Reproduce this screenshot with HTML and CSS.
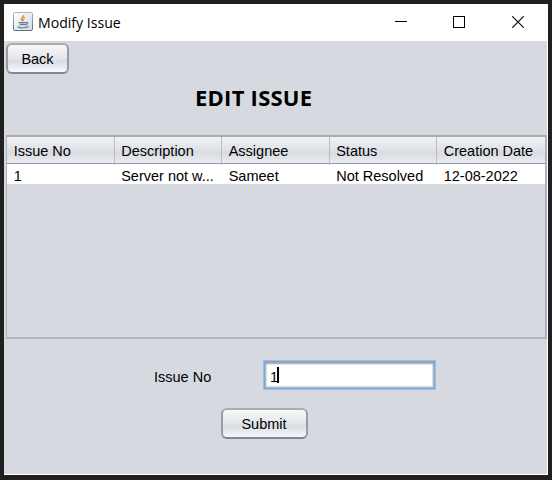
FILE: index.html
```html
<!DOCTYPE html>
<html lang="en">
<head>
<meta charset="utf-8">
<title>Modify Issue</title>
<link rel="stylesheet" href="styles.css">
</head>
<body>
<div class="window">
  <header class="titlebar">
    <svg class="app-icon" width="20" height="19" viewBox="0 0 20 19" fill="none">
      <defs>
        <linearGradient id="tile" x1="0" y1="0" x2="1" y2="1"><stop offset="0" stop-color="#fff"/><stop offset="1" stop-color="#d3dae1"/></linearGradient>
        <linearGradient id="edge" x1="0" y1="0" x2="0" y2="1"><stop offset="0" stop-color="#a9b7c4"/><stop offset="1" stop-color="#567189"/></linearGradient>
      </defs>
      <rect x=".5" y=".5" width="19" height="18" rx="1.5" fill="url(#tile)" stroke="url(#edge)"/>
      <path d="M10.500 3c1 2-3.500 3-2 5 .5.700 1 1 1 1.500M12 5.500c-2 1-2.500 2-1.500 3.500" stroke="#e8964f" stroke-width="1.500"/>
      <path d="M5.500 10.700h7.500M6.500 12.500h6M13 10.300c2.500-.2 2 2-.5 2.500M4.500 14.800c3 1.300 8 1.300 11-.4" stroke="#6487a4" stroke-width="1.300"/>
    </svg>
    <span class="window-title">Modify Issue</span>
    <div class="controls">
      <svg width="12" height="12" viewBox="0 0 12 12"><path d="M0 5.500h12" stroke="#000"/></svg>
      <svg width="12" height="12" viewBox="0 0 12 12"><rect x=".5" y=".5" width="11" height="11" fill="none" stroke="#000"/></svg>
      <svg class="close" width="12" height="12" viewBox="0 0 12 12"><path d="M.3.3l11.400 11.400M11.700.3L.3 11.700" stroke="#000" stroke-width="1.100"/></svg>
    </div>
  </header>
  <main class="content">
    <button class="button back">Back</button>
    <h1 class="heading">EDIT ISSUE</h1>
    <div class="table">
      <div class="row head"><span>Issue No</span><span>Description</span><span>Assignee</span><span>Status</span><span>Creation Date</span></div>
      <div class="row record"><span>1</span><span>Server not w...</span><span>Sameet</span><span>Not Resolved</span><span>12-08-2022</span></div>
    </div>
    <div class="form">
      <span class="label">Issue No</span>
      <div class="field">1<i class="caret"></i></div>
    </div>
    <button class="button submit">Submit</button>
  </main>
</div>
</body>
</html>
```
FILE: styles.css
```css
* { box-sizing: border-box; }
body {
  margin: 0;
  width: 552px;
  height: 480px;
  padding: 4px 4px 5px;
  overflow: hidden;
  background: #211f20;
  font: 14.5px/18px "Liberation Sans", Arial, sans-serif;
  color: #000;
}
.window { width: 544px; height: 471px; background: #fff; }
.titlebar { display: flex; align-items: center; height: 37px; padding: 0 24px 0 9px; }
.app-icon { flex: none; margin-top: -2px; }
.window-title { margin-left: 5px; font: 14.1px/20px "Open Sans", sans-serif; white-space: nowrap; }
.controls { display: flex; gap: 46px; margin: -1px 1px 0 auto; }
.controls svg { display: block; }
.controls .close { margin: 0 -1px 0 1px; }
.content { display: flex; flex-direction: column; width: 543px; height: 433px; background: #d6d9e0; }
.button {
  flex: none;
  padding: 0;
  border: 2px solid;
  border-color: #a9acb1 #989ba1 #84878e;
  border-radius: 6px;
  background: linear-gradient(#f7f8f9, #e5e7eb 48%, #d9dce2 58%, #e7eaf1 80%, #f5f8ff);
  font: inherit;
  color: #000;
}
.back { width: 63px; height: 31px; margin: 2px 0 0 2px; padding-top: 1px; }
.heading {
  margin: 8px 0 0 191px;
  height: 30px;
  font: bold 22px/30px "Open Sans", sans-serif;
  letter-spacing: .25px;
  white-space: nowrap;
}
.table {
  width: 541px;
  height: 204px;
  margin: 23px 0 0 2px;
  border: 1px solid #aeb1bb;
  border-top: 2px solid #a9acb4;
  border-right: 2px solid #aeb1be;
  border-bottom: 2px solid #b4b7be;
}
.row { display: grid; grid-template-columns: repeat(5, 107.5px); white-space: nowrap; }
.row span { padding-left: 6.7px; }
.head {
  height: 27px;
  line-height: 28px;
  border-bottom: 1px solid #9297a1;
  background: linear-gradient(#f2f3f5, #dfe1e5 50%, #d8dbe1 58%, #e8ebf3);
}
.head span + span { margin-left: -.6px; border-left: 1px solid #b9bdc5; padding-left: 6.3px; }
.record { height: 20px; line-height: 24px; background: #fff; }
.form { display: flex; align-items: center; height: 30px; margin-top: 21px; padding-left: 150px; }
.label { width: 109px; padding-top: 3px; }
.field {
  display: flex;
  align-items: center;
  width: 173px;
  height: 30px;
  padding: 4px 0 0 6px;
  border: 1px solid #a4bfda;
  background: #fff;
  box-shadow: inset 0 0 0 1.5px #7ca6cf, inset 0 3px 2px #aaa, inset 0 0 1px 3px #d5d8dc;
}
.caret { width: 2px; height: 16px; margin: -4px 0 0 -1px; background: #000; }
.submit { width: 87px; height: 31px; margin: 18px 0 0 217px; padding-right: 1px; }
```
